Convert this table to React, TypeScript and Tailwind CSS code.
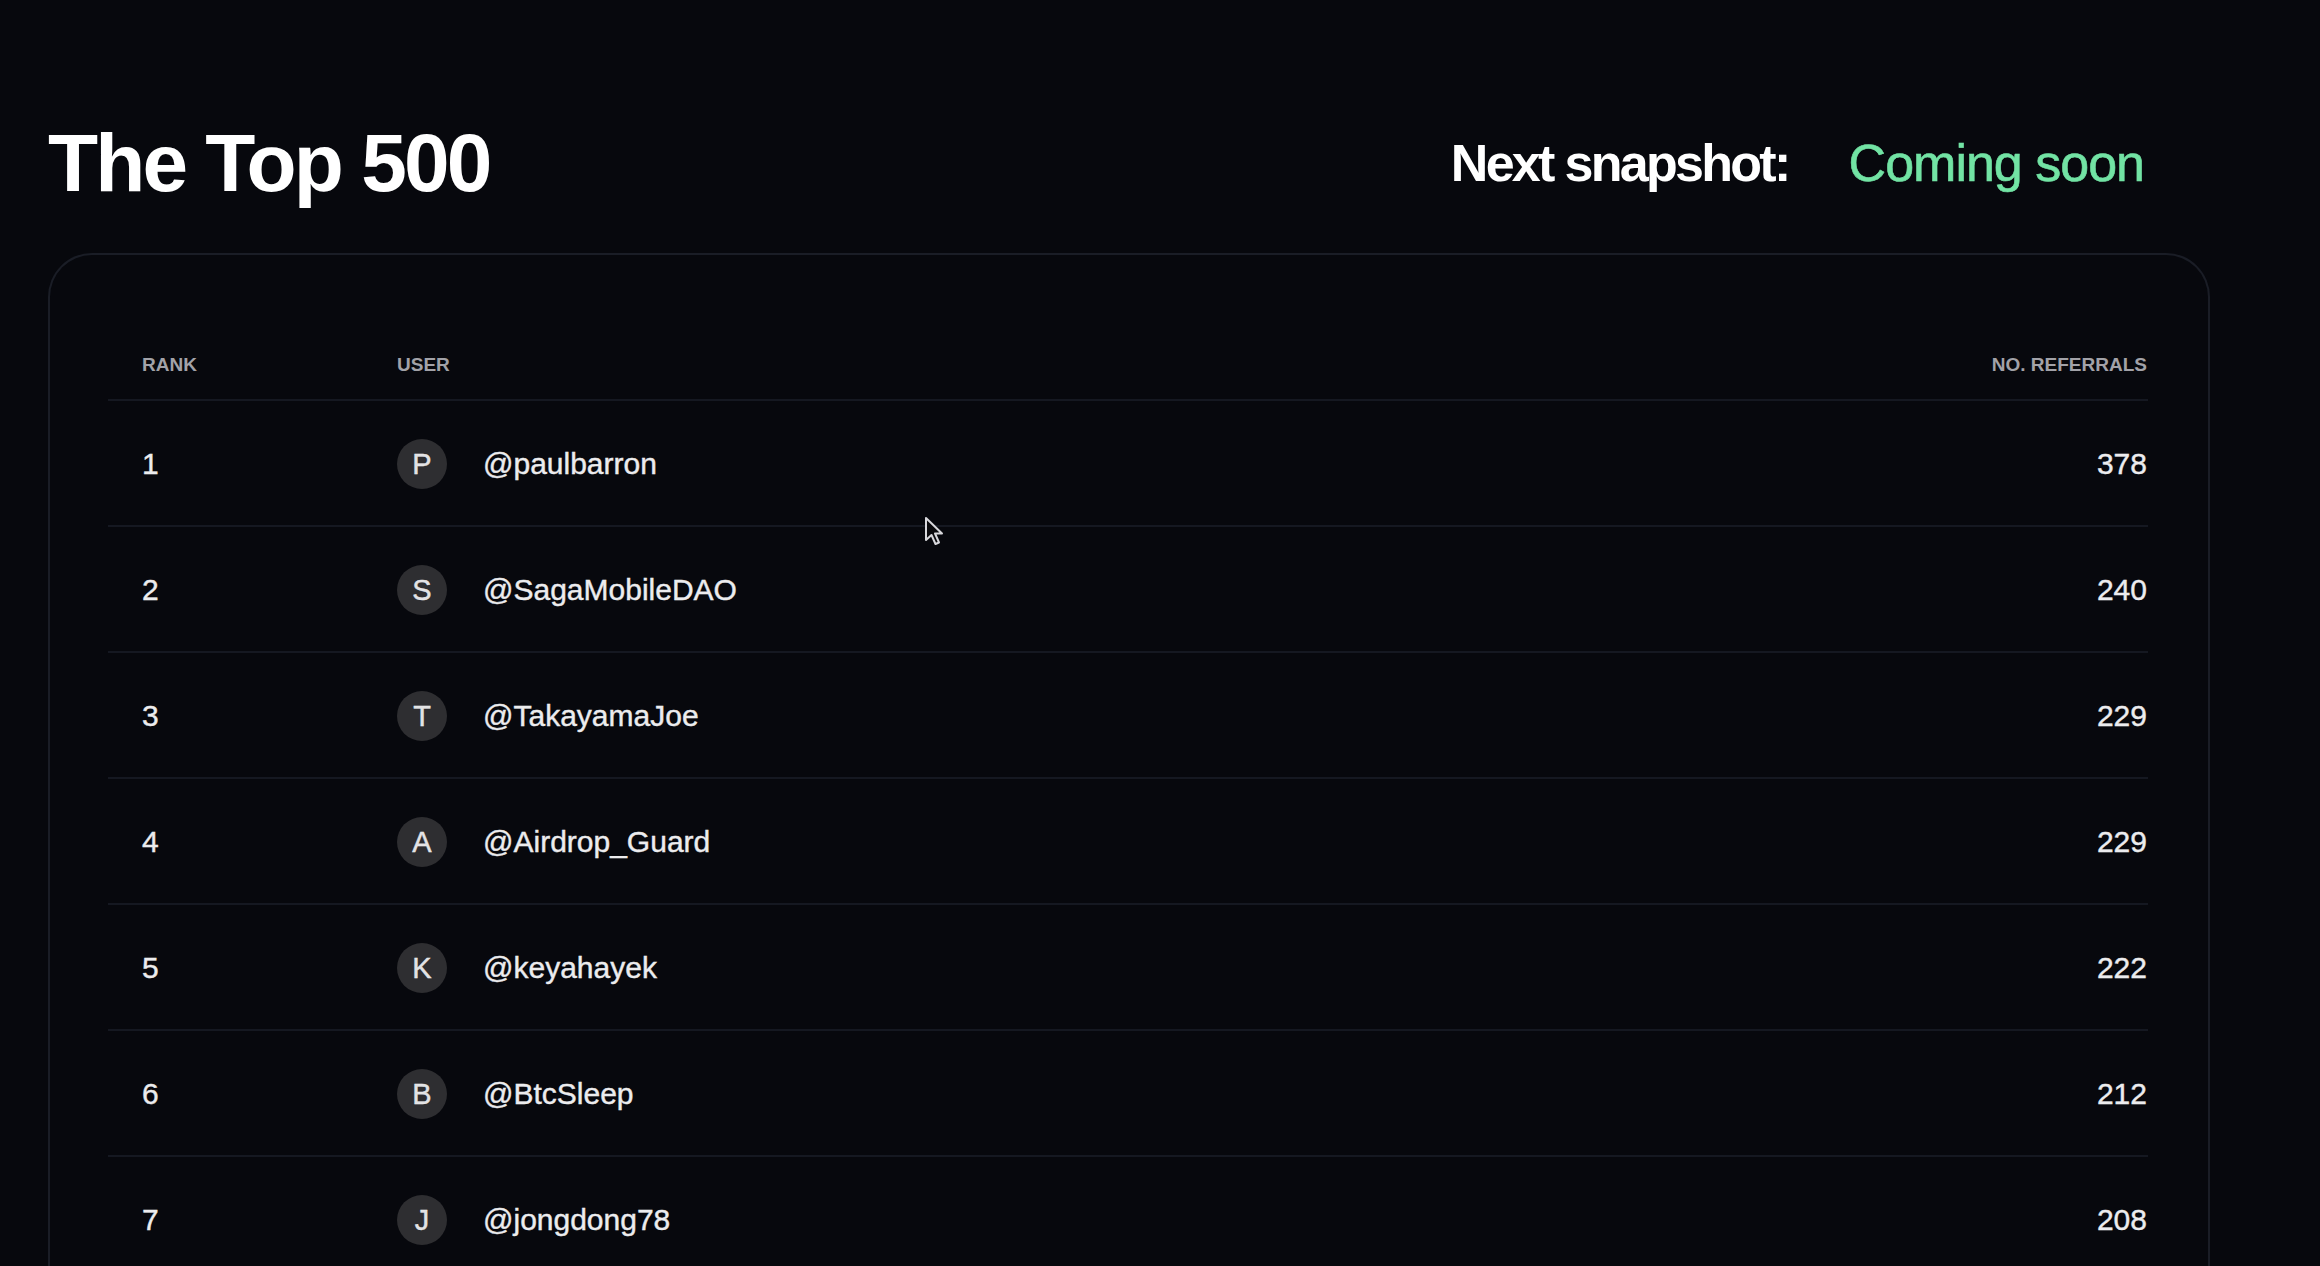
const rows = [
  { rank: 1, user: "paulbarron", count: 378 },
  { rank: 2, user: "SagaMobileDAO", count: 240 },
  { rank: 3, user: "TakayamaJoe", count: 229 },
  { rank: 4, user: "Airdrop_Guard", count: 229 },
  { rank: 5, user: "keyahayek", count: 222 },
  { rank: 6, user: "BtcSleep", count: 212 },
  { rank: 7, user: "jongdong78", count: 208 },
];

function Cursor() {
  return (
    <svg
      className="absolute left-[924px] top-[516px]"
      width="22"
      height="32"
      viewBox="0 0 22 32"
      fill="none"
    >
      <path
        d="M2 2 L2 24 L7.5 19 L11.5 28 L15 26.5 L11 17.5 L18 17.5 Z"
        fill="#0a0a0d"
        stroke="#d8d8dc"
        strokeWidth="2"
        strokeLinejoin="round"
      />
    </svg>
  );
}

export default function App() {
  return (
    <div className="relative h-screen overflow-hidden bg-[#07080d] pl-[48px] pr-[110px] font-['Liberation_Sans',Arial,sans-serif] text-white">
      <header className="flex items-start justify-between pt-[122px]">
        <h1 className="text-[82px] font-bold leading-none tracking-[-2.8px] text-white">
          The Top 500
        </h1>
        <div className="mr-[66px] mt-[15px] flex items-baseline gap-[60px] text-[52px] leading-none">
          <span className="font-bold tracking-[-2.7px] text-white">Next snapshot:</span>
          <span className="tracking-[-1px] text-[#72e3a4] [-webkit-text-stroke:0.6px_#72e3a4]">
            Coming soon
          </span>
        </div>
      </header>

      <section className="mt-[49px] rounded-t-[44px] border-2 border-b-0 border-[#1a1d26] pb-[40px] pl-[58px] pr-[60px]">
        <div className="flex items-center border-b-2 border-[#151821] pb-[24px] pt-[100px] text-[19px] font-bold uppercase leading-[20px] text-[#a2a2a8]">
          <div className="w-[289px] pl-[34px]">Rank</div>
          <div className="flex-1">User</div>
          <div className="pr-[1px] text-right">No. Referrals</div>
        </div>

        {rows.map((r) => (
          <div
            key={r.rank}
            className="flex h-[126px] items-center border-b-2 border-[#151821] pt-[2px] text-[30px] leading-none text-[#ececee] [-webkit-text-stroke:0.4px_#ececee]"
          >
            <div className="w-[289px] pl-[34px]">{r.rank}</div>
            <div className="flex flex-1 items-center gap-[36px]">
              <span className="flex h-[50px] w-[50px] items-center justify-center rounded-full bg-[#2e2e31] text-[29px] text-[#e2e2e4]">
                {r.user[0].toUpperCase()}
              </span>
              <span>@{r.user}</span>
            </div>
            <div className="pr-[1px] text-right">{r.count}</div>
          </div>
        ))}
      </section>

      <Cursor />
    </div>
  );
}
